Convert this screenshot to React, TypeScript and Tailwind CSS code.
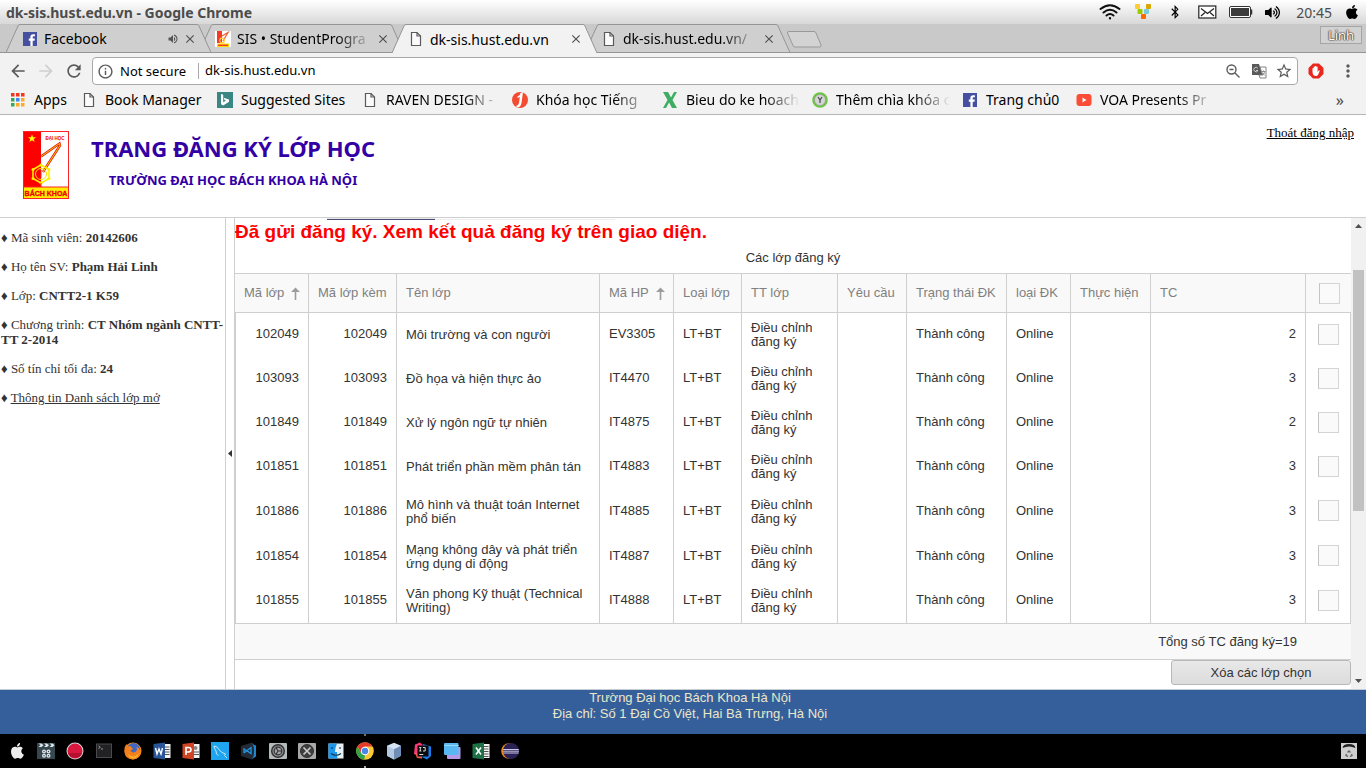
import React from 'react';
import { FaApple, FaBluetoothB, FaVolumeUp } from 'react-icons/fa';
import {
  MdArrowBack,
  MdArrowForward,
  MdRefresh,
  MdInfoOutline,
  MdStarBorder,
  MdMoreVert,
  MdClose,
  MdVolumeUp,
} from 'react-icons/md';

const uiFont = "font-['Noto_Sans',sans-serif]";
const sans = "font-['Liberation_Sans',sans-serif]";
const serif = "font-['Liberation_Serif',serif]";
const fade = '[mask-image:linear-gradient(to_right,black_calc(100%-36px),transparent)]';

/* ---------- small pictures ---------- */

const PageIcon = () => (
  <svg width="16" height="16" viewBox="0 0 16 16" className="shrink-0" fill="none" stroke="#5a5a5a" strokeWidth="1.2">
    <path d="M3.5 1.5h5.5l3.5 3.5v9.5h-9z" fill="#fbfbfb" />
    <path d="M9 1.5v3.5h3.5" />
  </svg>
);

const FacebookIcon = () => (
  <svg width="14" height="14" viewBox="0 0 14 14" className="shrink-0">
    <rect width="14" height="14" fill="#4650a0" />
    <path d="M7.4 14V8.8H5.8V6.6h1.6V5c0-1.8 1-2.8 2.8-2.8h1.7v2.1h-1.1c-.8 0-1.1.3-1.1 1v1.3h2.1l-.3 2.2H9.7V14z" fill="#fff" />
  </svg>
);

const HustLogo = () => (
  <svg width="46" height="68" viewBox="0 0 46 68" className="shrink-0">
    <rect x="0.5" y="0.5" width="45" height="67" fill="#fff" stroke="#f22" />
    <rect x="1" y="1" width="17" height="55" fill="#f00" />
    <path d="M9 3.5l1.1 2.800h2.900l-2.300 1.800.9 2.900L9 9.300l-2.600 1.700.9-2.900L5 6.300h2.900z" fill="#ff0" />
    <path d="M18 25.500L36.500 12.500L37 14.500L20 41" fill="none" stroke="#e02010" strokeWidth="2.400" />
    <path d="M18 25.500L36.500 12.500L37 14.500L20 41" fill="none" stroke="#fd0" strokeWidth="0.900" />
    <path d="M18 34l8 4.500v9L18 52l-8-4.500v-9z" fill="none" stroke="#fe0" strokeWidth="1.600" />
    <g fill="#fe0">
      <circle cx="18" cy="34" r="1.500" />
      <circle cx="26" cy="38.500" r="1.500" />
      <circle cx="26" cy="47.500" r="1.500" />
      <circle cx="18" cy="52" r="1.500" />
      <circle cx="10" cy="47.500" r="1.500" />
      <circle cx="10" cy="38.500" r="1.500" />
    </g>
    <circle cx="18" cy="43" r="5.500" fill="none" stroke="#fd0" strokeWidth="1" />
    <path d="M18 52v4M18 39v8" stroke="#f22" />
    <rect x="1" y="56" width="44" height="11" fill="#fe0" />
    <path d="M1 56h44" stroke="#f22" />
    <text x="23" y="65" textAnchor="middle" fontSize="7" fontWeight="700" fill="#e00" stroke="#e00" strokeWidth="0.3" fontFamily="Liberation Sans Narrow, Liberation Sans">
      BÁCH KHOA
    </text>
    <text x="32" y="9" textAnchor="middle" fontSize="4.500" fontWeight="700" fill="#e00" fontFamily="Liberation Sans">
      ĐẠI HỌC
    </text>
  </svg>
);

const HustFavicon = () => (
  <svg width="16" height="16" viewBox="0 0 16 16" className="shrink-0">
    <rect width="16" height="16" fill="#fff" />
    <path d="M2 0h5v12H2z" fill="#f43a22" />
    <path d="M7 5l6-3.500L8 10" fill="none" stroke="#f0603a" strokeWidth="1.300" />
    <circle cx="7" cy="9.500" r="2.300" fill="none" stroke="#fc3" strokeWidth="1.200" />
    <path d="M2 12.500h12V16H2z" fill="#fd0" />
    <path d="M3 14.300h10" stroke="#f43a22" strokeWidth="1.400" />
  </svg>
);

const SortArrow = () => (
  <svg width="9" height="13" viewBox="0 0 9 13" className="shrink-0" fill="#9c9c9c">
    <path d="M4.500 0.500L9 5H5.300v8H3.700V5H0z" />
  </svg>
);

/* ---------- browser chrome ---------- */

type TabInfo = {
  title: string;
  icon: React.ReactNode;
  layer: string;
  sound?: boolean;
  active?: boolean;
  clipped?: boolean;
};

const tabs: TabInfo[] = [
  { title: 'Facebook', icon: <FacebookIcon />, sound: true, layer: 'z-20' },
  { title: 'SIS • StudentProgra', icon: <HustFavicon />, layer: 'z-10', clipped: true },
  { title: 'dk-sis.hust.edu.vn', icon: <PageIcon />, layer: 'z-30', active: true },
  { title: 'dk-sis.hust.edu.vn/', icon: <PageIcon />, layer: 'z-10', clipped: true },
];

function BrowserTab({ tab }: { tab: TabInfo }) {
  const fill = tab.active ? '#f2f2f2' : '#cfcfcf';
  return (
    <div className={`relative -ml-3 flex h-[29px] w-[205px] ${tab.layer}`}>
      <svg width="14" height="29" viewBox="0 0 14 29" className="shrink-0">
        <path d="M0 29L12 2Q12.500 .5 14 .5V29z" fill={fill} />
        <path d={tab.active ? 'M0 29L12 2Q12.500 .5 14 .5' : 'M14 28.500H0L12 2Q12.500 .5 14 .5'} fill="none" stroke="#959595" />
      </svg>
      <div
        className={`flex min-w-0 flex-1 items-center border-t border-[#959595] ${
          tab.active ? 'bg-[#f2f2f2]' : 'border-b bg-[#cfcfcf]'
        }`}
      >
        <span className="flex w-5 shrink-0 justify-center">{tab.icon}</span>
        <span className={`ml-1 min-w-0 flex-1 overflow-hidden text-[14px] whitespace-nowrap text-black ${tab.clipped ? fade : ''}`}>
          {tab.title}
        </span>
        {tab.sound && <MdVolumeUp size={12} color="#555" className="shrink-0" />}
        <button type="button" aria-label={`Close ${tab.title}`} className="ml-1 shrink-0">
          <MdClose size={14} color="#505050" />
        </button>
      </div>
      <svg width="14" height="29" viewBox="0 0 14 29" className="shrink-0">
        <path d="M14 29L2 2Q1.500 .5 0 .5V29z" fill={fill} />
        <path d={tab.active ? 'M14 29L2 2Q1.500 .5 0 .5' : 'M0 28.500H14L2 2Q1.500 .5 0 .5'} fill="none" stroke="#959595" />
      </svg>
    </div>
  );
}

function TitleBar() {
  return (
    <header className="flex h-6 items-center justify-between bg-linear-to-b from-white to-[#d8d8d8] px-1.5 text-[#4c4c4c]">
      <span className="text-[14px] font-bold">dk-sis.hust.edu.vn - Google Chrome</span>
      <div className="flex items-center text-black">
        <svg width="22" height="16" viewBox="0 0 22 16" className="mr-3.5" fill="none" stroke="#111" strokeWidth="2" strokeLinecap="round">
          <path d="M1.500 5Q11-2.500 20.500 5M4.500 8.500Q11 3 17.500 8.500M7.500 11.500Q11 8.500 14.500 11.500" />
          <circle cx="11" cy="14.300" r="0.600" fill="#111" strokeWidth="1.200" />
        </svg>
        <svg width="17" height="16" viewBox="0 0 17 16" className="mr-4">
          <rect x="0" y="0" width="5" height="5" rx="1" fill="#fc3" />
          <rect x="11" y="0" width="5" height="5" rx="1" fill="#d9a800" />
          <rect x="2.500" y="5" width="5" height="5" rx="1" fill="#9c0" />
          <rect x="9" y="5" width="5" height="5" rx="1" fill="#7cd" />
          <rect x="6" y="10" width="5" height="5" rx="1" fill="#f60" />
        </svg>
        <FaBluetoothB size={14} className="mr-4" />
        <svg width="19" height="14" viewBox="0 0 19 14" className="mr-3" fill="none" stroke="#222" strokeWidth="1.200">
          <rect x=".8" y="1" width="17" height="12" fill="#fff" />
          <path d="M3 3.500l6.500 5 6.500-5M3 11l4-3.500M16 11l-4-3.500" />
        </svg>
        <svg width="24" height="12" viewBox="0 0 24 12" className="mr-3">
          <rect x=".5" y=".5" width="21" height="11" rx="1.500" fill="#fff" stroke="#333" />
          <rect x="2" y="2" width="18" height="8" fill="#3a3a3a" />
          <path d="M22.500 3.500v5" stroke="#333" strokeWidth="1.500" />
        </svg>
        <FaVolumeUp size={15} className="mr-4" />
        <span className="mr-3 text-[14px] text-[#4c4c4c]">20:45</span>
        <FaApple size={16} />
      </div>
    </header>
  );
}

function TabStrip() {
  return (
    <div className="flex h-[29px] justify-between bg-linear-to-t from-[#959595] from-[1px] to-[#c9c9c9] to-[1px] pr-1 pl-[18px]">
      <div className="flex">
        {tabs.map((t) => (
          <BrowserTab key={t.title} tab={t} />
        ))}
        <button type="button" aria-label="New tab" className="-ml-1 self-start pt-1.5">
          <svg width="36" height="19" viewBox="0 0 36 19">
            <path d="M3 1.500h25q1.500 0 2 1.500l5 12q.5 2-1.500 2H9q-1.500 0-2-1.500L1.500 3q-.5-1.500 1.500-1.500z" fill="#d3d3d3" stroke="#999" />
          </svg>
        </button>
      </div>
      <button
        type="button"
        className="mt-0.5 h-[18px] w-[42px] border border-[#a5a5a5] bg-[#d2d2d2] text-[13px] leading-4 text-white [text-shadow:0_0_1px_#222,0_0_1px_#222,0_0_2px_#222]"
      >
        Linh
      </button>
    </div>
  );
}

function Toolbar() {
  return (
    <div className="flex h-9 items-center bg-[#f2f2f2] px-2 text-[#5a5a5a]">
      <button type="button" aria-label="Back" className="mr-2"><MdArrowBack size={20} /></button>
      <button type="button" aria-label="Forward" className="mr-2 text-[#cfcfcf]"><MdArrowForward size={20} /></button>
      <button type="button" aria-label="Reload" className="mr-2"><MdRefresh size={20} /></button>
      <div className="flex h-7 flex-1 items-center rounded-sm border border-[#a9a9a9] bg-white px-1">
        <MdInfoOutline size={17} />
        <span className="ml-1.5 border-r border-[#a9a9a9] pr-3 text-[13px] leading-4 text-black">Not secure</span>
        <input
          aria-label="Address"
          defaultValue="dk-sis.hust.edu.vn"
          className="ml-1.5 min-w-0 flex-1 bg-transparent text-[13px] text-black outline-none"
        />
        <svg width="16" height="16" viewBox="0 0 16 16" fill="none" stroke="#5a5a5a" strokeWidth="1.400" className="mr-2.5">
          <circle cx="6.500" cy="6.500" r="4.500" />
          <path d="M10 10l4.500 4.500M4.500 6.500h4" />
        </svg>
        <svg width="16" height="16" viewBox="0 0 16 16" className="mr-2">
          <path d="M1 1h7l3.500 11H1z" fill="#5a5a5a" />
          <path d="M9 4h6v11H9l-1-3h3.500z" fill="#fff" stroke="#777" strokeWidth=".9" />
          <path d="M6.800 5.200A2.200 2.200 0 1 0 7 7.500H5" fill="none" stroke="#ddd" strokeWidth=".9" />
          <path d="M10.800 8.500h3.500M12.500 7.500v1M11.500 12.500c1.300-1 1.900-2.300 2-4M11.500 9.500c.5 1.200 1.200 2 2.300 2.800" fill="none" stroke="#777" strokeWidth=".8" />
        </svg>
        <MdStarBorder size={18} />
      </div>
      <svg width="16" height="16" viewBox="0 0 16 16" className="ml-2.5">
        <path d="M5 .5h6L15.500 5v6L11 15.500H5L.5 11V5z" fill="#e8281e" />
        <path d="M4.500 8.500V5.300q.7-.8 1.200 0V7.500V3.800q.7-.8 1.300 0V7V3.200q.7-.8 1.300 0V7V3.900q.7-.8 1.300 0V9l1-1.500q.8-.5 1.200.2L10 12q-.8 1-2 1-3.500 0-3.500-4.500z" fill="#fff" />
      </svg>
      <button type="button" aria-label="Menu" className="ml-3.5"><MdMoreVert size={20} /></button>
    </div>
  );
}

const AppsIcon = () => (
  <svg width="14" height="14" viewBox="0 0 14 14" className="shrink-0">
    {['#f4361e', '#f4361e', '#f4361e', '#34a853', '#4285f4', '#fbab2a', '#34a853', '#fbab2a', '#fbab2a'].map((c, i) => (
      <rect key={i} x={(i % 3) * 5} y={Math.floor(i / 3) * 5} width="3.500" height="3.500" fill={c} />
    ))}
  </svg>
);

const bookmarks: { label: string; icon: React.ReactNode; width: string; clipped?: boolean }[] = [
  { label: 'Apps', icon: <AppsIcon />, width: 'w-[71px]' },
  { label: 'Book Manager', icon: <PageIcon />, width: 'w-[136px]' },
  {
    label: 'Suggested Sites',
    width: 'w-[145px]',
    icon: (
      <svg width="16" height="16" viewBox="0 0 16 16" className="shrink-0">
        <rect width="16" height="16" fill="#3a8683" />
        <path d="M4 2l2.200.8v7.400l2.800-1.600-1.500-.7-.9-2.200L12 7.500v2.300L6.200 13.500 4 12.200z" fill="#fff" />
      </svg>
    ),
  },
  { label: 'RAVEN DESIGN -', icon: <PageIcon />, width: 'w-[150px]', clipped: true },
  {
    label: 'Khóa học Tiếng',
    width: 'w-[150px]',
    clipped: true,
    icon: (
      <svg width="16" height="16" viewBox="0 0 16 16" className="shrink-0">
        <circle cx="8" cy="8" r="8" fill="#f44a32" />
        <path d="M11 0L9.500 11q-.8 4-4 4.500L4 14q2.500-.5 3-3l.8-6L5.500 6V4.500Q8.500 3 8.500 1z" fill="#fff" />
      </svg>
    ),
  },
  {
    label: 'Bieu do ke hoach',
    width: 'w-[150px]',
    clipped: true,
    icon: (
      <svg width="16" height="16" viewBox="0 0 16 16" className="shrink-0" fill="#3fae62">
        <path d="M1 0h5l3 5.500L12 0h3l-4.500 8L15 16h-5L7 10.500 4 16H1l4.500-8z" />
      </svg>
    ),
  },
  {
    label: 'Thêm chìa khóa c',
    width: 'w-[150px]',
    clipped: true,
    icon: (
      <svg width="16" height="16" viewBox="0 0 16 16" className="shrink-0">
        <circle cx="8" cy="8" r="7.800" fill="#6cc644" />
        <circle cx="8" cy="8" r="5.500" fill="#d5d5d5" stroke="#999" strokeWidth=".7" />
        <path d="M6 5L8 8l2-3M8 8v3" fill="none" stroke="#444" strokeWidth="1.200" />
      </svg>
    ),
  },
  { label: 'Trang chủ0', icon: <FacebookIcon />, width: 'w-[114px]' },
  {
    label: 'VOA Presents Pr',
    width: 'w-[140px]',
    clipped: true,
    icon: (
      <svg width="16" height="16" viewBox="0 0 16 16" className="shrink-0">
        <rect x=".5" y="2" width="15" height="12" rx="3" fill="#fb4c36" />
        <path d="M6.500 5.500v5l4-2.500z" fill="#fff" />
      </svg>
    ),
  },
];

function BookmarksBar() {
  return (
    <nav className="flex h-[26px] items-center border-b border-[#b5b5b5] bg-[#f2f2f2] pb-1 pl-2.5 text-black">
      {bookmarks.map((b) => (
        <a key={b.label} href="#" className={`flex shrink-0 items-center gap-2 text-[14px] leading-5 ${b.width}`}>
          <span className="flex w-4 shrink-0 justify-center">{b.icon}</span>
          <span className={`overflow-hidden whitespace-nowrap ${b.clipped ? `w-[114px] ${fade}` : ''}`}>{b.label}</span>
        </a>
      ))}
      <button type="button" aria-label="More bookmarks" className="mr-[22px] ml-auto text-[16px] leading-5 text-[#444]">
        »
      </button>
    </nav>
  );
}

/* ---------- page ---------- */

function PageHeader() {
  return (
    <header className="flex h-[103px] shrink-0 justify-between border-b border-[#cfcfcf] bg-white pt-2.5 pr-3 pl-[23px]">
      <div className="flex items-start gap-[22px]">
        <div className="pt-1.5"><HustLogo /></div>
        <div className={`flex flex-col pt-[7px] text-center font-bold text-[#3300a5] ${uiFont}`}>
          <h1 className="text-[22px] leading-8">TRANG ĐĂNG KÝ LỚP HỌC</h1>
          <h2 className="text-[13px] leading-8">TRƯỜNG ĐẠI HỌC BÁCH KHOA HÀ NỘI</h2>
        </div>
      </div>
      <a href="#" className={`self-start text-[13px] leading-4 text-black underline ${serif}`}>Thoát đăng nhập</a>
    </header>
  );
}

const student: { label: string; value: string }[] = [
  { label: 'Mã sinh viên', value: '20142606' },
  { label: 'Họ tên SV', value: 'Phạm Hải Linh' },
  { label: 'Lớp', value: 'CNTT2-1 K59' },
  { label: 'Chương trình', value: 'CT Nhóm ngành CNTT-TT 2-2014' },
  { label: 'Số tín chỉ tối đa', value: '24' },
];

function Sidebar() {
  return (
    <aside className={`w-[226px] shrink-0 border-r border-[#cfcfcf] pt-3 pl-px text-[13px] leading-[15px] text-[#333] ${serif}`}>
      <ul className="flex flex-col gap-3.5">
        {student.map((s) => (
          <li key={s.label}>
            ♦ {s.label}: <b>{s.value}</b>
          </li>
        ))}
        <li>
          ♦ <a href="#" className="underline">Thông tin Danh sách lớp mở</a>
        </li>
      </ul>
    </aside>
  );
}

type Row = { id: string; name: string; code: string; credits: number; height: string };

const rows: Row[] = [
  { id: '102049', name: 'Môi trường và con người', code: 'EV3305', credits: 2, height: 'h-11' },
  { id: '103093', name: 'Đồ họa và hiện thực ảo', code: 'IT4470', credits: 3, height: 'h-11' },
  { id: '101849', name: 'Xử lý ngôn ngữ tự nhiên', code: 'IT4875', credits: 2, height: 'h-11' },
  { id: '101851', name: 'Phát triển phần mềm phân tán', code: 'IT4883', credits: 3, height: 'h-11' },
  { id: '101886', name: 'Mô hình và thuật toán Internet phổ biến', code: 'IT4885', credits: 3, height: 'h-[45px]' },
  { id: '101854', name: 'Mạng không dây và phát triển ứng dụng di động', code: 'IT4887', credits: 3, height: 'h-[45px]' },
  { id: '101855', name: 'Văn phong Kỹ thuật (Technical Writing)', code: 'IT4888', credits: 3, height: 'h-11' },
];

const columns: { label: string; width: string; sorted?: boolean }[] = [
  { label: 'Mã lớp', width: 'w-[74px]', sorted: true },
  { label: 'Mã lớp kèm', width: 'w-[88px]' },
  { label: 'Tên lớp', width: '' },
  { label: 'Mã HP', width: 'w-[74px]', sorted: true },
  { label: 'Loại lớp', width: 'w-[68px]' },
  { label: 'TT lớp', width: 'w-[96px]' },
  { label: 'Yêu cầu', width: 'w-[69px]' },
  { label: 'Trạng thái ĐK', width: 'w-[100px]' },
  { label: 'loại ĐK', width: 'w-[64px]' },
  { label: 'Thực hiện', width: 'w-[80px]' },
  { label: 'TC', width: 'w-[155px]' },
];

const boxClass =
  'block size-[21px] appearance-none border border-[#d4d4d4] border-l-[#c4c4c4] bg-[#fafafa] checked:bg-[#9ab]';

function ClassTable() {
  const cell = 'border-r border-[#cfcfcf] px-[9px] pb-0.5';
  return (
    <table className="w-full table-fixed border-separate border-spacing-0 text-[13px] leading-[14px] text-[#333]">
      <colgroup>
        {columns.map((c) => (
          <col key={c.label} className={c.width} />
        ))}
        <col className="w-[45px]" />
      </colgroup>
      <thead>
        <tr className="h-10 bg-[#f9f9f9] text-left text-[#808080]">
          {columns.map((c) => (
            <th key={c.label} scope="col" className="border-y border-r border-[#cfcfcf] pr-2 pl-[9px] font-normal whitespace-nowrap">
              <span className="flex items-center justify-between">
                {c.label}
                {c.sorted && <SortArrow />}
              </span>
            </th>
          ))}
          <th className="border-y border-[#cfcfcf] pl-[13px]">
            <input type="checkbox" aria-label="Chọn tất cả" className={boxClass} />
          </th>
        </tr>
      </thead>
      <tbody>
        {rows.map((r) => (
          <tr key={r.id} className={r.height}>
            <td className={`border-l text-right ${cell}`}>{r.id}</td>
            <td className={`text-right ${cell}`}>{r.id}</td>
            <td className="border-r border-[#cfcfcf] px-[9px]">{r.name}</td>
            <td className={cell}>{r.code}</td>
            <td className={cell}>LT+BT</td>
            <td className="border-r border-[#cfcfcf] px-[9px]">Điều chỉnh đăng ký</td>
            <td className={cell} />
            <td className={cell}>Thành công</td>
            <td className={cell}>Online</td>
            <td className={cell} />
            <td className={`text-right ${cell}`}>{r.credits}</td>
            <td className="border-r border-[#cfcfcf] pb-0.5 pl-3">
              <input type="checkbox" aria-label={`Chọn lớp ${r.id}`} className={boxClass} />
            </td>
          </tr>
        ))}
      </tbody>
      <tfoot>
        <tr className="h-[37px] bg-[#f9f9f9]">
          <td colSpan={11} className="border-y border-[#cfcfcf] pr-[9px] text-right">
            Tổng số TC đăng ký=19
          </td>
          <td className="border-y border-[#cfcfcf]" />
        </tr>
      </tfoot>
    </table>
  );
}

function Scrollbar() {
  return (
    <div className="flex w-[15px] shrink-0 flex-col items-center bg-[#f1f1f1] py-1.5">
      <svg width="7" height="4" viewBox="0 0 7 4"><path d="M3.500 0L7 4H0z" fill="#505050" /></svg>
      <div className="flex w-[11px] flex-1 flex-col pt-[42px]">
        <div className="h-[59%] bg-[#c1c1c1]" />
      </div>
      <svg width="7" height="4" viewBox="0 0 7 4"><path d="M3.500 4L7 0H0z" fill="#505050" /></svg>
    </div>
  );
}

function Registration() {
  return (
    <main className={`flex min-w-0 flex-1 flex-col overflow-hidden border-l border-[#cfcfcf] text-[13px] text-[#333] ${sans}`}>
      <div className="flex h-0.5 shrink-0 pl-[92px]">
        <span className="w-[108px] border-b border-[#4a4f7a] bg-[#e5e5e5]" />
        <span className="w-[180px] border-b border-[#eeeeee]" />
      </div>
      <p className="text-[19px] leading-6 font-bold text-[#f00]">Đã gửi đăng ký. Xem kết quả đăng ký trên giao diện.</p>
      <p className="h-[29px] pt-1.5 text-center leading-4">Các lớp đăng ký</p>
      <ClassTable />
      <button
        type="button"
        className="h-[25px] w-[180px] shrink-0 self-end rounded-[3px] border border-[#b8b8b8] bg-linear-to-b from-[#e8e8e8] to-[#dcdcdc]"
      >
        Xóa các lớp chọn
      </button>
    </main>
  );
}

/* ---------- dock ---------- */

const dock: { name: string; art: React.ReactNode }[] = [
  { name: 'Launcher', art: <path d="M12.300 8.700c0-1.900 1.500-2.800 1.600-2.900-.9-1.300-2.300-1.500-2.700-1.500-1.200-.1-2.300.7-2.800.7-.6 0-1.500-.7-2.500-.7C4.600 4.300 3.400 5 2.700 6.200c-1.400 2.400-.4 6 1 8 .7 1 1.500 2 2.500 2s1.400-.6 2.600-.6 1.500.6 2.600.6c1 0 1.800-1 2.400-1.900.8-1.100 1.100-2.200 1.100-2.200s-2.600-.9-2.600-3.400zM10.300 3c.5-.7.9-1.600.8-2.500-.8 0-1.800.5-2.300 1.200-.5.6-1 1.500-.8 2.400.9.1 1.800-.5 2.300-1.100z" fill="#eee" transform="translate(1 .5)" /> },
  {
    name: 'Video',
    art: (
      <>
        <rect y="1" width="18" height="16" fill="#37474f" />
        <path d="M1.500 1.500h3l2 1.700-2 1.800h-3l2-1.800zM7 1.500h3l2 1.700L10 5H7l2-1.800zM12.500 1.500h3l2 1.700-2 1.800h-3l2-1.800z" fill="#dfe6e9" />
        <circle cx="7" cy="9.500" r="2" fill="#dfe6e9" /><circle cx="11.500" cy="9.500" r="2" fill="#dfe6e9" />
        <circle cx="7" cy="13.800" r="2" fill="#dfe6e9" /><circle cx="11.500" cy="13.800" r="2" fill="#dfe6e9" />
        <circle cx="7" cy="9.500" r=".7" fill="#37474f" /><circle cx="11.500" cy="9.500" r=".7" fill="#37474f" />
        <circle cx="7" cy="13.800" r=".7" fill="#37474f" /><circle cx="11.500" cy="13.800" r=".7" fill="#37474f" />
      </>
    ),
  },
  { name: 'Opera', art: <><circle cx="9" cy="9" r="8.500" fill="#d5d5d5" /><circle cx="9" cy="9" r="7.500" fill="#d8183e" /><path d="M2 11a7.500 7.500 0 0 0 14 0z" fill="#b5102e" /></> },
  { name: 'Terminal', art: <><rect x="1.500" y="2" width="15" height="13.500" fill="#222224" stroke="#4a4a4a" /><path d="M3.500 4l1.800 1.300-1.800 1.300M6 7h2" fill="none" stroke="#bbb" strokeWidth=".8" /></> },
  {
    name: 'Firefox',
    art: (
      <>
        <circle cx="9" cy="9" r="8.500" fill="#f08a1c" />
        <circle cx="9.500" cy="7.500" r="6.500" fill="#3f67c4" />
        <path d="M.7 5q1-2 2.300-3l.5 2.500 3-.5 2.500 3-2.500 1.500q1 2.500 4 1.800 3.500-1 2-5.800 4 2 3.500 6-1 6.500-7.500 7Q1 17 .5 10z" fill="#f4801c" />
        <path d="M4 12q5 5 11-.5-2 5-6 5-3.500 0-5-4.500z" fill="#fbb02a" />
      </>
    ),
  },
  {
    name: 'Word',
    art: (
      <>
        <rect x="9" y="2" width="8.500" height="14" fill="#f4f4f4" /><path d="M11 5h5.500M11 7.500h5.500M11 10h5.500M11 12.500h5.500" stroke="#555" />
        <path d="M.5 2L12 .5v17L.5 16z" fill="#2a5699" /><path d="M2.500 6l1.500 6 2-5 2 5 1.500-6" fill="none" stroke="#fff" strokeWidth="1.400" />
      </>
    ),
  },
  {
    name: 'PowerPoint',
    art: (
      <>
        <rect x="9" y="2" width="8.500" height="14" fill="#f4f4f4" /><circle cx="13.500" cy="6" r="2" fill="#888" /><path d="M12 10h5M12 12.500h5" stroke="#555" />
        <path d="M.5 2L12 .5v17L.5 16z" fill="#d04423" /><path d="M4 13V5.500h2.500q2.500 0 2.500 2.200T6.500 10H4" fill="none" stroke="#fff" strokeWidth="1.600" />
      </>
    ),
  },
  { name: 'MySQL Workbench', art: <><rect width="18" height="18" fill="#1fa4ef" /><path d="M3 4q3 0 5 3.500Q10 11 14.500 12l-1 1.500L16 16M3 4q0 2 2 5l.5 3 2 1.500" fill="none" stroke="#d5f1ff" strokeWidth=".9" /></> },
  { name: 'Code', art: <><path d="M1 4L12 .5 14 2v14l-2 1.500L1 14z" fill="#232a35" /><path d="M12 2l4 1.500v11L12 17q2-2 2-8t-2-7z" fill="#1c86d1" /><path d="M4 11V7l7 4.500v-6L4 11" fill="none" stroke="#2196e0" strokeWidth="1.300" /></> },
  { name: 'Settings', art: <><rect y="1" width="18" height="16" rx="1" fill="#b4b9bb" /><circle cx="9" cy="9" r="6.300" fill="#8b8f92" stroke="#303030" strokeWidth="1.400" /><circle cx="9" cy="9" r="3.800" fill="#a5a5a5" stroke="#333" strokeWidth="1.200" /><path d="M9 9h4M9 9L7 5.500M9 9l-2 3.500" stroke="#333" strokeWidth="1.200" /></> },
  { name: 'Tools', art: <><rect y="1" width="18" height="16" rx="1" fill="#a9a9a9" /><circle cx="9" cy="9" r="6.500" fill="#3e3e3e" stroke="#333" /><path d="M5.500 5.500l7 7M12.500 5.500l-7 7" stroke="#ccc" strokeWidth="1.600" /></> },
  { name: 'Finder', art: <><rect x="1.500" y="1.500" width="15" height="15" fill="#e8f1f8" /><path d="M1.500 1.500H10Q8 6 8 10h2q0 3 .5 6.500h-9z" fill="#1c98ee" /><path d="M5 5v2M13 5v2M4 11.500q5 3.500 10 0" fill="none" stroke="#134" strokeWidth="1.100" /></> },
  {
    name: 'Chrome',
    art: (
      <>
        <circle cx="9" cy="9" r="8.800" fill="#fcc934" />
        <path d="M1.400 4.600A8.800 8.800 0 0 1 16.600 4.600H9L5.200 11.200z" fill="#e33b2e" />
        <path d="M1.400 4.600l3.800 6.600 3.800 2.200-.8 4.400A8.800 8.800 0 0 1 1.400 4.600z" fill="#2fa24c" />
        <circle cx="9" cy="9" r="4.200" fill="#fff" /><circle cx="9" cy="9" r="3.200" fill="#4a86e8" />
      </>
    ),
  },
  { name: 'VirtualBox', art: <><path d="M9 .8l7 3v10L9 17.500 2 13.800v-10z" fill="#d5e3f2" /><path d="M2 3.800l7 3.400v10.300L2 13.800z" fill="#b4c8e2" /><path d="M9 7.200l7-3.400v10L9 17.500z" fill="#6f8db5" /></> },
  { name: 'IntelliJ IDEA', art: <><path d="M1 2.500L6 .5l4 3.500L3.500 13 0 12z" fill="#fb3a72" /><path d="M9 2l8 2.500V14l-4 3.500L8 15z" fill="#1a7df0" /><path d="M1 11l7 2v3.500l-5-.5z" fill="#fc5a4e" /><rect x="3.500" y="3.500" width="11" height="11" fill="#0b0b0b" /><path d="M5.300 5.500h2M6.300 5.500v3.500M5.300 9h2M9 5.500h2.200V9H9M5.300 12.500h4" fill="none" stroke="#eee" strokeWidth=".9" /></> },
  { name: 'Files', art: <><rect x="4" y="5" width="13.500" height="12" rx="1" fill="#b49be8" /><rect x="1" y="1" width="14.500" height="12" rx="1" fill="#58b9f2" /><path d="M1 3.500h14.500" stroke="#9bd9fa" /></> },
  { name: 'Excel', art: <><rect x="9" y="2" width="8.500" height="14" fill="#f4f4f4" /><path d="M12 4.500h4.500M12 7h4.500M12 9.500h4.500M12 12h4.500M12 14.500h4.500" stroke="#555" /><path d="M.5 2L12 .5v17L.5 16z" fill="#1e7145" /><path d="M4 5.500l5 7M9 5.500l-5 7" stroke="#fff" strokeWidth="1.500" /></> },
  { name: 'Eclipse', art: <><circle cx="8" cy="9" r="7.800" fill="#f08a24" /><circle cx="10" cy="9" r="8" fill="#2a2154" /><path d="M2.200 7.500h15.600M2 9.200h16M2.200 11h15.600" stroke="#c9c4e2" strokeWidth="1" /></> },
];

function Dock() {
  return (
    <footer className="flex h-[34px] shrink-0 items-center justify-between bg-black pr-[9px] pl-2">
      <div className="flex items-center gap-[11px]">
        {dock.map((d) => (
          <button key={d.name} type="button" aria-label={d.name} className="relative">
            <svg width="18" height="18" viewBox="0 0 18 18">{d.art}</svg>
            {d.name === 'Chrome' && (
              <>
                <span className="absolute -top-2 left-2 h-0.5 w-0.5 rounded-full bg-[#999]" />
                <span className="absolute -bottom-2 left-2 h-0.5 w-0.5 rounded-full bg-[#eee]" />
              </>
            )}
          </button>
        ))}
      </div>
      <button type="button" aria-label="Trash">
        <svg width="16" height="16" viewBox="0 0 16 16">
          <rect width="16" height="16" fill="#cfcfcf" />
          <path d="M1.500 5Q2 1 8 1t6.500 4Q11 3.500 8 3.500T1.500 5z" fill="#222" />
          <path d="M6.500 9.500L8 8l1.500 1.500M10.500 11l.5 1.500-2 1M5.500 11L5 12.500l2 1" fill="none" stroke="#666" strokeWidth="1.400" />
        </svg>
      </button>
    </footer>
  );
}

export default function App() {
  return (
    <div className="flex h-screen flex-col overflow-hidden bg-white">
      <div className={`shrink-0 ${uiFont}`}>
        <TitleBar />
        <TabStrip />
        <Toolbar />
        <BookmarksBar />
      </div>
      <PageHeader />
      <div className="flex min-h-0 flex-1">
        <Sidebar />
        <div className="flex w-2 shrink-0 items-center justify-center">
          <svg width="4" height="7" viewBox="0 0 4 7"><path d="M0 3.500L4 0v7z" fill="#333" /></svg>
        </div>
        <Registration />
        <Scrollbar />
      </div>
      <section className={`h-[45px] shrink-0 border-t border-[#c3ccd4] bg-[#355f9b] pl-3.5 text-center text-[13px] leading-4 text-[#ebe7c8] ${sans}`}>
        <p>Trường Đại học Bách Khoa Hà Nội</p>
        <p>Địa chỉ: Số 1 Đại Cồ Việt, Hai Bà Trưng, Hà Nội</p>
      </section>
      <Dock />
    </div>
  );
}
